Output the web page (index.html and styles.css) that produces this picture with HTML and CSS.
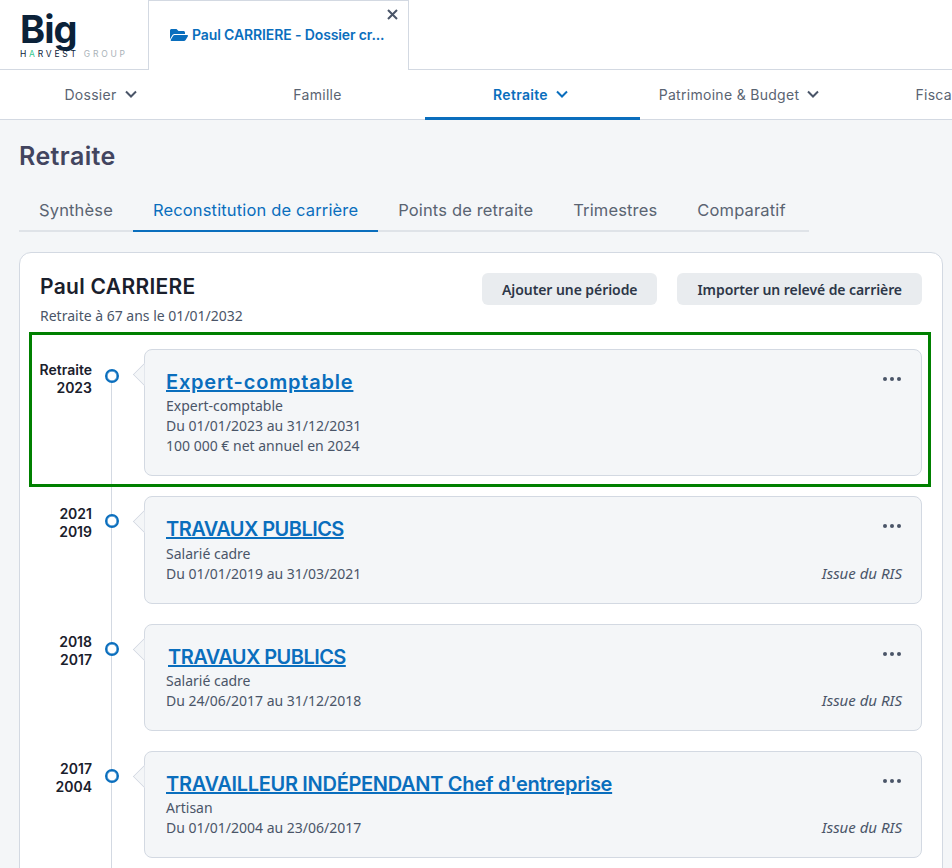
FILE: index.html
```html
<!DOCTYPE html>
<html lang="fr">
<head>
    <meta charset="UTF-8">
    <title>Retraite</title>
    <link rel="stylesheet" href="styles.css">
</head>
<body>
    <header class="top-bar">
        <div class="logo">
            <div class="logo-big">Big</div>
            <div class="logo-small">H<span class="logo-a">A</span>RVEST <span class="logo-group">GROUP</span></div>
        </div>
        <div class="file-tab">
            <svg class="folder-icon" viewBox="0 0 576 512"><path d="M572.694 292.093L500.27 416.248A63.997 63.997 0 0 1 444.989 448H45.025c-18.523 0-30.064-20.093-20.731-36.093l72.424-124.155A64 64 0 0 1 152 256h399.964c18.523 0 30.064 20.093 20.73 36.093zM152 224h328v-48c0-26.51-21.49-48-48-48H272l-64-64H48C21.49 64 0 85.49 0 112v278.046l69.077-118.418C86.214 242.25 117.989 224 152 224z"/></svg>
            <span class="file-name">Paul CARRIERE - Dossier cr...</span>
            <svg class="close-icon" viewBox="0 0 11 11"><path d="M1 1l9 9M10 1l-9 9"/></svg>
        </div>
    </header>

    <nav class="main-nav">
        <a class="nav-item">Dossier <svg class="chevron" viewBox="0 0 12 8"><path d="M1 1.5l5 5 5-5"/></svg></a>
        <a class="nav-item">Famille</a>
        <a class="nav-item active">Retraite <svg class="chevron" viewBox="0 0 12 8"><path d="M1 1.5l5 5 5-5"/></svg></a>
        <a class="nav-item nav-item-left">Patrimoine &amp; Budget <svg class="chevron" viewBox="0 0 12 8"><path d="M1 1.5l5 5 5-5"/></svg></a>
        <a class="nav-item nav-item-left">Fiscalité <svg class="chevron" viewBox="0 0 12 8"><path d="M1 1.5l5 5 5-5"/></svg></a>
    </nav>

    <main class="content">
        <h1 class="page-title">Retraite</h1>

        <div class="sub-tabs">
            <a class="sub-tab">Synthèse</a>
            <a class="sub-tab active">Reconstitution de carrière</a>
            <a class="sub-tab">Points de retraite</a>
            <a class="sub-tab">Trimestres</a>
            <a class="sub-tab">Comparatif</a>
        </div>

        <section class="card">
            <div class="card-header">
                <div>
                    <h2 class="person-name">Paul CARRIERE</h2>
                    <p class="person-sub">Retraite à 67 ans le 01/01/2032</p>
                </div>
                <div class="card-actions">
                    <button class="btn">Ajouter une période</button>
                    <button class="btn">Importer un relevé de carrière</button>
                </div>
            </div>

            <div class="timeline">
                <article class="timeline-item is-selected">
                    <div class="years">Retraite<br>2023</div>
                    <div class="dot-col"><span class="dot"></span></div>
                    <div class="panel">
                        <a class="panel-title title-lower">Expert-comptable</a>
                        <p class="panel-line">Expert-comptable</p>
                        <p class="panel-line">Du 01/01/2023 au 31/12/2031</p>
                        <p class="panel-line">100 000 € net annuel en 2024</p>
                        <div class="more"><i></i><i></i><i></i></div>
                    </div>
                </article>

                <article class="timeline-item">
                    <div class="years">2021<br>2019</div>
                    <div class="dot-col"><span class="dot"></span></div>
                    <div class="panel">
                        <a class="panel-title title-caps">TRAVAUX PUBLICS</a>
                        <p class="panel-line">Salarié cadre</p>
                        <p class="panel-line">Du 01/01/2019 au 31/03/2021</p>
                        <div class="more"><i></i><i></i><i></i></div>
                        <span class="origin">Issue du RIS</span>
                    </div>
                </article>

                <article class="timeline-item">
                    <div class="years">2018<br>2017</div>
                    <div class="dot-col"><span class="dot"></span></div>
                    <div class="panel">
                        <a class="panel-title title-caps shifted">TRAVAUX PUBLICS</a>
                        <p class="panel-line">Salarié cadre</p>
                        <p class="panel-line">Du 24/06/2017 au 31/12/2018</p>
                        <div class="more"><i></i><i></i><i></i></div>
                        <span class="origin">Issue du RIS</span>
                    </div>
                </article>

                <article class="timeline-item">
                    <div class="years">2017<br>2004</div>
                    <div class="dot-col"><span class="dot"></span></div>
                    <div class="panel">
                        <a class="panel-title title-long">TRAVAILLEUR INDÉPENDANT Chef d'entreprise</a>
                        <p class="panel-line">Artisan</p>
                        <p class="panel-line">Du 01/01/2004 au 23/06/2017</p>
                        <div class="more"><i></i><i></i><i></i></div>
                        <span class="origin">Issue du RIS</span>
                    </div>
                </article>
            </div>
        </section>
    </main>
</body>
</html>
```

FILE: styles.css
```css
html, body {
    height: 100%;
    overflow: hidden;
}

body {
    margin: 0;
    background: #f4f6f8;
    font-family: 'Noto Sans', sans-serif;
    color: #4a5568;
}

/* top bar */
.top-bar {
    display: flex;
    height: 70px;
    box-sizing: border-box;
    background: #fff;
    border-bottom: 1px solid #d3d9e2;
}

.logo {
    width: 148px;
    box-sizing: border-box;
    padding: 8px 0 0 20px;
    color: #0b2239;
}

.logo-big {
    font-family: 'Inter', sans-serif;
    font-size: 38px;
    font-weight: 700;
    line-height: 42px;
    letter-spacing: -1px;
}

.logo-small {
    font-family: 'Inter', sans-serif;
    font-size: 8.5px;
    line-height: 8px;
    letter-spacing: 2.75px;
    white-space: nowrap;
}

.logo-a {
    color: #35c98f;
}

.logo-group {
    color: #a9b2b8;
}

.file-tab {
    position: relative;
    display: flex;
    align-items: center;
    width: 261px;
    height: 70px;
    box-sizing: border-box;
    padding: 0 20px 2px 21px;
    background: #fff;
    border: 1px solid #d3d9e2;
    border-bottom: none;
}

.folder-icon {
    flex: none;
    width: 18px;
    height: 16px;
    margin-right: 4px;
    fill: #0a6ebd;
}

.file-name {
    font-family: 'Inter', sans-serif;
    font-size: 14px;
    font-weight: 600;
    letter-spacing: -0.12px;
    color: #0a6ebd;
    white-space: nowrap;
}

.close-icon {
    position: absolute;
    top: 8px;
    right: 10px;
    width: 11px;
    height: 11px;
    fill: none;
    stroke: #4a5568;
    stroke-width: 2;
}

/* main nav */
.main-nav {
    display: flex;
    height: 50px;
    box-sizing: border-box;
    margin-left: -5px;
    background: #fff;
    border-bottom: 1px solid #d3d9e2;
}

.nav-item {
    flex: none;
    display: flex;
    align-items: center;
    justify-content: center;
    gap: 8px;
    width: 215px;
    height: 50px;
    box-sizing: border-box;
    padding-bottom: 2px;
    font-family: 'Inter', sans-serif;
    font-size: 14px;
    letter-spacing: 0.3px;
    color: #5a6472;
    white-space: nowrap;
}

.nav-item.active {
    padding-top: 1px;
    padding-bottom: 0;
    font-weight: 600;
    color: #0a6ebd;
    border-bottom: 3px solid #0a6ebd;
}

.nav-item-left {
    padding-right: 13px;
}

.chevron {
    width: 12px;
    height: 8px;
    margin-right: 4px;
    fill: none;
    stroke: #4a5568;
    stroke-width: 2;
}

.nav-item.active .chevron {
    stroke: #0a6ebd;
}

/* page content */
.content {
    padding: 18px 9px 0 19px;
}

.page-title {
    margin: 0 0 15px;
    font-family: 'Inter', sans-serif;
    font-size: 25px;
    font-weight: 600;
    line-height: 36px;
    letter-spacing: 0.4px;
    color: #42455f;
}

.sub-tabs {
    display: flex;
    width: 790px;
    border-bottom: 2px solid #dfe3e8;
}

.sub-tab {
    flex: none;
    padding: 9px 20px 8px;
    margin-bottom: -2px;
    font-family: 'Inter', sans-serif;
    font-size: 16.5px;
    line-height: 24px;
    letter-spacing: 0.15px;
    color: #5a6472;
    white-space: nowrap;
    border-bottom: 2px solid transparent;
}

.sub-tab.active {
    color: #0a6ebd;
    border-bottom-color: #0a6ebd;
}

.card {
    margin-top: 20px;
    padding: 20px 20px 0;
    background: #fff;
    border: 1px solid #d3d9e2;
    border-radius: 12px;
}

.card-header {
    display: flex;
    justify-content: space-between;
    align-items: flex-start;
}

.person-name {
    margin: 0;
    padding-top: 1px;
    font-family: 'Inter', sans-serif;
    font-size: 21px;
    font-weight: 600;
    line-height: 26px;
    letter-spacing: 0.3px;
    color: #1a202c;
}

.person-sub {
    margin: 6px 0 0;
    font-size: 14px;
    line-height: 20px;
}

.card-actions {
    display: flex;
    gap: 20px;
}

.btn {
    height: 32px;
    padding: 0 20px;
    font-family: 'Noto Sans', sans-serif;
    font-size: 14px;
    font-weight: 600;
    letter-spacing: -0.07px;
    color: #2d3748;
    background: #e9ecef;
    border: none;
    border-radius: 6px;
}

/* timeline */
.timeline {
    position: relative;
    margin: 6px -9px 0 -11px;
    padding-bottom: 20px;
}

.timeline::before {
    content: '';
    position: absolute;
    left: 82px;
    top: 40px;
    bottom: 0;
    width: 1px;
    background: #d3d9e2;
}

.timeline-item {
    position: relative;
    display: flex;
    margin-bottom: 20px;
    padding: 0 6px 0 0;
    border: solid transparent;
    border-width: 0 3px;
}

.timeline-item.is-selected {
    margin-bottom: 9px;
    padding-top: 14px;
    padding-bottom: 8px;
    border: 3px solid #008000;
}

.years {
    flex: none;
    width: 60px;
    margin-top: 9px;
    font-family: 'Inter', sans-serif;
    font-size: 14px;
    font-weight: 600;
    line-height: 18px;
    text-align: right;
    color: #1a202c;
}

.is-selected .years {
    margin-top: 12px;
}

.dot-col {
    flex: none;
    width: 40px;
    display: flex;
    justify-content: center;
}

.dot {
    width: 14px;
    height: 14px;
    box-sizing: border-box;
    margin-top: 18px;
    background: #fff;
    border: 2px solid #0a6ebd;
    border-radius: 50%;
    box-shadow: inset 0 0 0 0.5px #0a6ebd;
}

.is-selected .dot {
    margin-top: 20px;
}

.panel {
    position: relative;
    flex: 1;
    margin-left: 12px;
    padding: 19px 21px 19px;
    background: #f4f6f8;
    border: 1px solid #d3d9e2;
    border-radius: 8px;
    box-sizing: border-box;
}

.panel::before {
    content: '';
    position: absolute;
    left: -9px;
    top: 16px;
    width: 16px;
    height: 16px;
    background: #f4f6f8;
    border-left: 1px solid #d3d9e2;
    border-bottom: 1px solid #d3d9e2;
    transform: rotate(45deg);
    clip-path: polygon(0 0, 100% 100%, 0 100%);
}

.panel-title {
    display: block;
    font-family: 'Inter', sans-serif;
    font-size: 20px;
    font-weight: 600;
    line-height: 27.33px;
    color: #0a6ebd;
    text-decoration: underline;
}

.title-lower {
    letter-spacing: 0.8px;
}

.title-caps {
    letter-spacing: -0.55px;
}

.title-long {
    letter-spacing: -0.3px;
}

.panel-title.shifted {
    margin-left: 2px;
}

.panel-line {
    margin: 0;
    font-size: 14px;
    line-height: 20px;
}

.more {
    position: absolute;
    top: 27px;
    right: 20px;
    display: flex;
    gap: 3px;
}

.more i {
    width: 4px;
    height: 4px;
    background: #4a5568;
    border-radius: 50%;
}

.origin {
    position: absolute;
    right: 19px;
    bottom: 20px;
    font-size: 15px;
    font-style: italic;
    line-height: 20px;
}
```
